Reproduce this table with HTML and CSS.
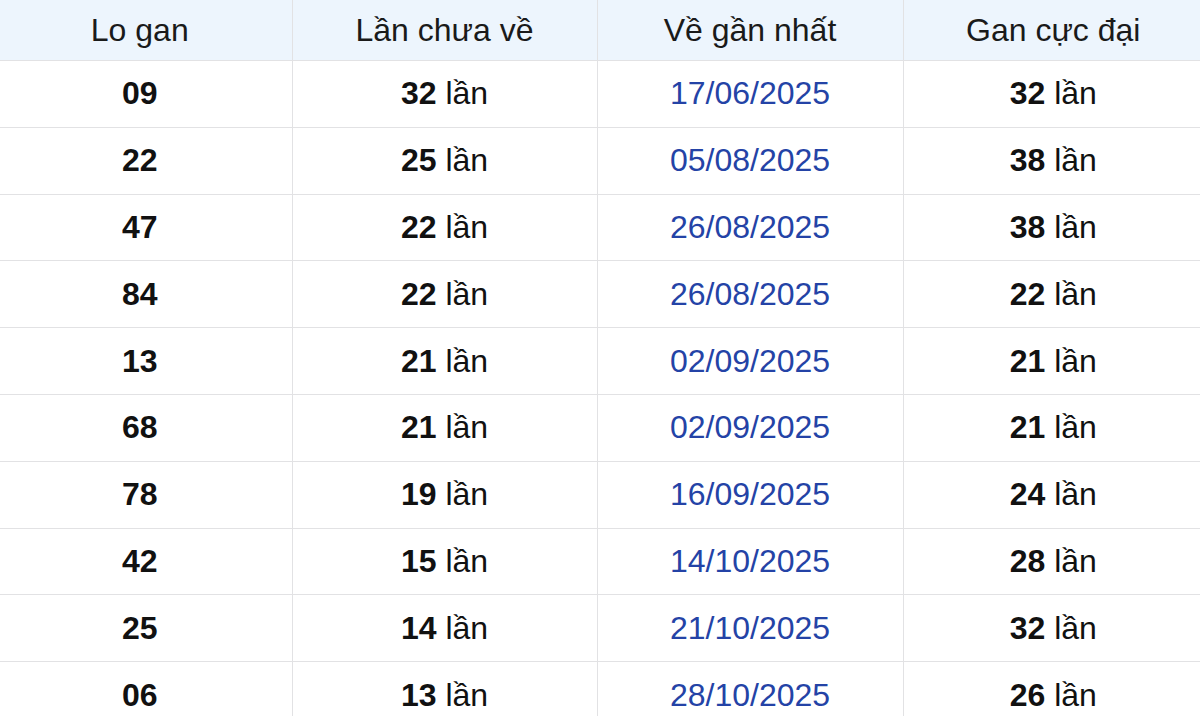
FILE: index.html
```html
<!DOCTYPE html>
<html lang="vi">
<head>
<meta charset="utf-8">
<title>Lo gan</title>
<link rel="stylesheet" href="styles.css">
</head>
<body>
<table class="gan-table">
  <colgroup>
    <col class="c1"><col class="c2"><col class="c3"><col class="c4">
  </colgroup>
  <thead>
    <tr><th>Lo gan</th><th>Lần chưa về</th><th>Về gần nhất</th><th>Gan cực đại</th></tr>
  </thead>
  <tbody>
    <tr><td class="num">09</td><td><b>32</b> lần</td><td class="date">17/06/2025</td><td><b>32</b> lần</td></tr>
    <tr><td class="num">22</td><td><b>25</b> lần</td><td class="date">05/08/2025</td><td><b>38</b> lần</td></tr>
    <tr><td class="num">47</td><td><b>22</b> lần</td><td class="date">26/08/2025</td><td><b>38</b> lần</td></tr>
    <tr><td class="num">84</td><td><b>22</b> lần</td><td class="date">26/08/2025</td><td><b>22</b> lần</td></tr>
    <tr><td class="num">13</td><td><b>21</b> lần</td><td class="date">02/09/2025</td><td><b>21</b> lần</td></tr>
    <tr><td class="num">68</td><td><b>21</b> lần</td><td class="date">02/09/2025</td><td><b>21</b> lần</td></tr>
    <tr><td class="num">78</td><td><b>19</b> lần</td><td class="date">16/09/2025</td><td><b>24</b> lần</td></tr>
    <tr><td class="num">42</td><td><b>15</b> lần</td><td class="date">14/10/2025</td><td><b>28</b> lần</td></tr>
    <tr><td class="num">25</td><td><b>14</b> lần</td><td class="date">21/10/2025</td><td><b>32</b> lần</td></tr>
    <tr><td class="num">06</td><td><b>13</b> lần</td><td class="date">28/10/2025</td><td><b>26</b> lần</td></tr>
  </tbody>
</table>
</body>
</html>
```
FILE: styles.css
```css
html, body {
  margin: 0;
  padding: 0;
  background: #fff;
  overflow: hidden;
}
body {
  font-family: "Liberation Sans", Arial, sans-serif;
  color: #111;
}
.gan-table {
  width: 1215px;
  margin-left: -12px;
  table-layout: fixed;
  border-collapse: collapse;
  font-size: 32px;
}
.c1 { width: 304px; }
.c2 { width: 305px; }
.c3 { width: 306px; }
.c4 { width: 300px; }
.gan-table th,
.gan-table td {
  text-align: center;
  padding: 0;
  border: 1px solid #e2e2e4;
}
.gan-table tr > :first-child { border-left: none; }
.gan-table tr > :last-child { border-right: none; }
.gan-table thead tr:first-child th { border-top: none; }
.gan-table th {
  height: 60px;
  font-weight: normal;
  background: #edf5fd;
  color: #1a1a1a;
}
.gan-table td {
  height: 65.8px;
}
.gan-table b { font-weight: bold; }
.num { font-weight: bold; }
.date { color: #2443a6; }
```
